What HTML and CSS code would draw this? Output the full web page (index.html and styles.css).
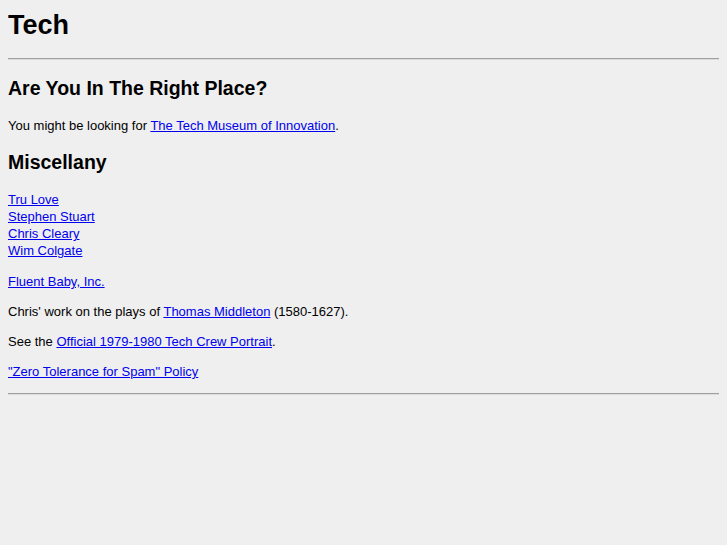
FILE: index.html
```html
<!DOCTYPE html>
<html lang="en">
<head>
    <meta charset="UTF-8">
    <meta name="viewport" content="width=device-width, initial-scale=1.0">
    <title>Tech</title>
    <link rel="stylesheet" href="styles.css">
</head>
<body>
    <h1 class="title">Tech</h1>
    <hr class="rule">

    <h2 class="section">Are You In The Right Place?</h2>
    <p class="text">You might be looking for <a href="#">The Tech Museum of Innovation</a>.</p>

    <h2 class="section">Miscellany</h2>
    <p class="text people">
        <a href="#">Tru Love</a><br>
        <a href="#">Stephen Stuart</a><br>
        <a href="#">Chris Cleary</a><br>
        <a href="#">Wim Colgate</a>
    </p>
    <p class="text"><a href="#">Fluent Baby, Inc.</a></p>
    <p class="text">Chris' work on the plays of <a href="#">Thomas Middleton</a> (1580-1627).</p>
    <p class="text">See the <a href="#">Official 1979-1980 Tech Crew Portrait</a>.</p>
    <p class="text"><a href="#">"Zero Tolerance for Spam" Policy</a></p>

    <hr class="rule rule-end">
</body>
</html>
```

FILE: styles.css
```css
body{
    margin: 8px;
    background-color: #efefef;
    color: #000;
    font-family: "Liberation Sans", Arial, sans-serif;
    font-size: 13px;
    line-height: 17px;
}

.title{
    font-size: 27px;
    line-height: 30px;
    margin: 2px 0 18px;
}

.rule{
    margin: 0 0 0 -1px;
    border: 0;
    border-top: 1px solid #a0a0a0;
    border-bottom: 1px solid #dcdcdc;
    height: 0;
}

.rule-end{
    margin-top: 13px;
}

.section{
    font-size: 19.5px;
    line-height: 22px;
    margin: 17px 0 18px;
}

.text{
    margin: 13px 0;
}

.people{
    margin-bottom: 14px;
}

a{
    color: #0000ee;
}
```
